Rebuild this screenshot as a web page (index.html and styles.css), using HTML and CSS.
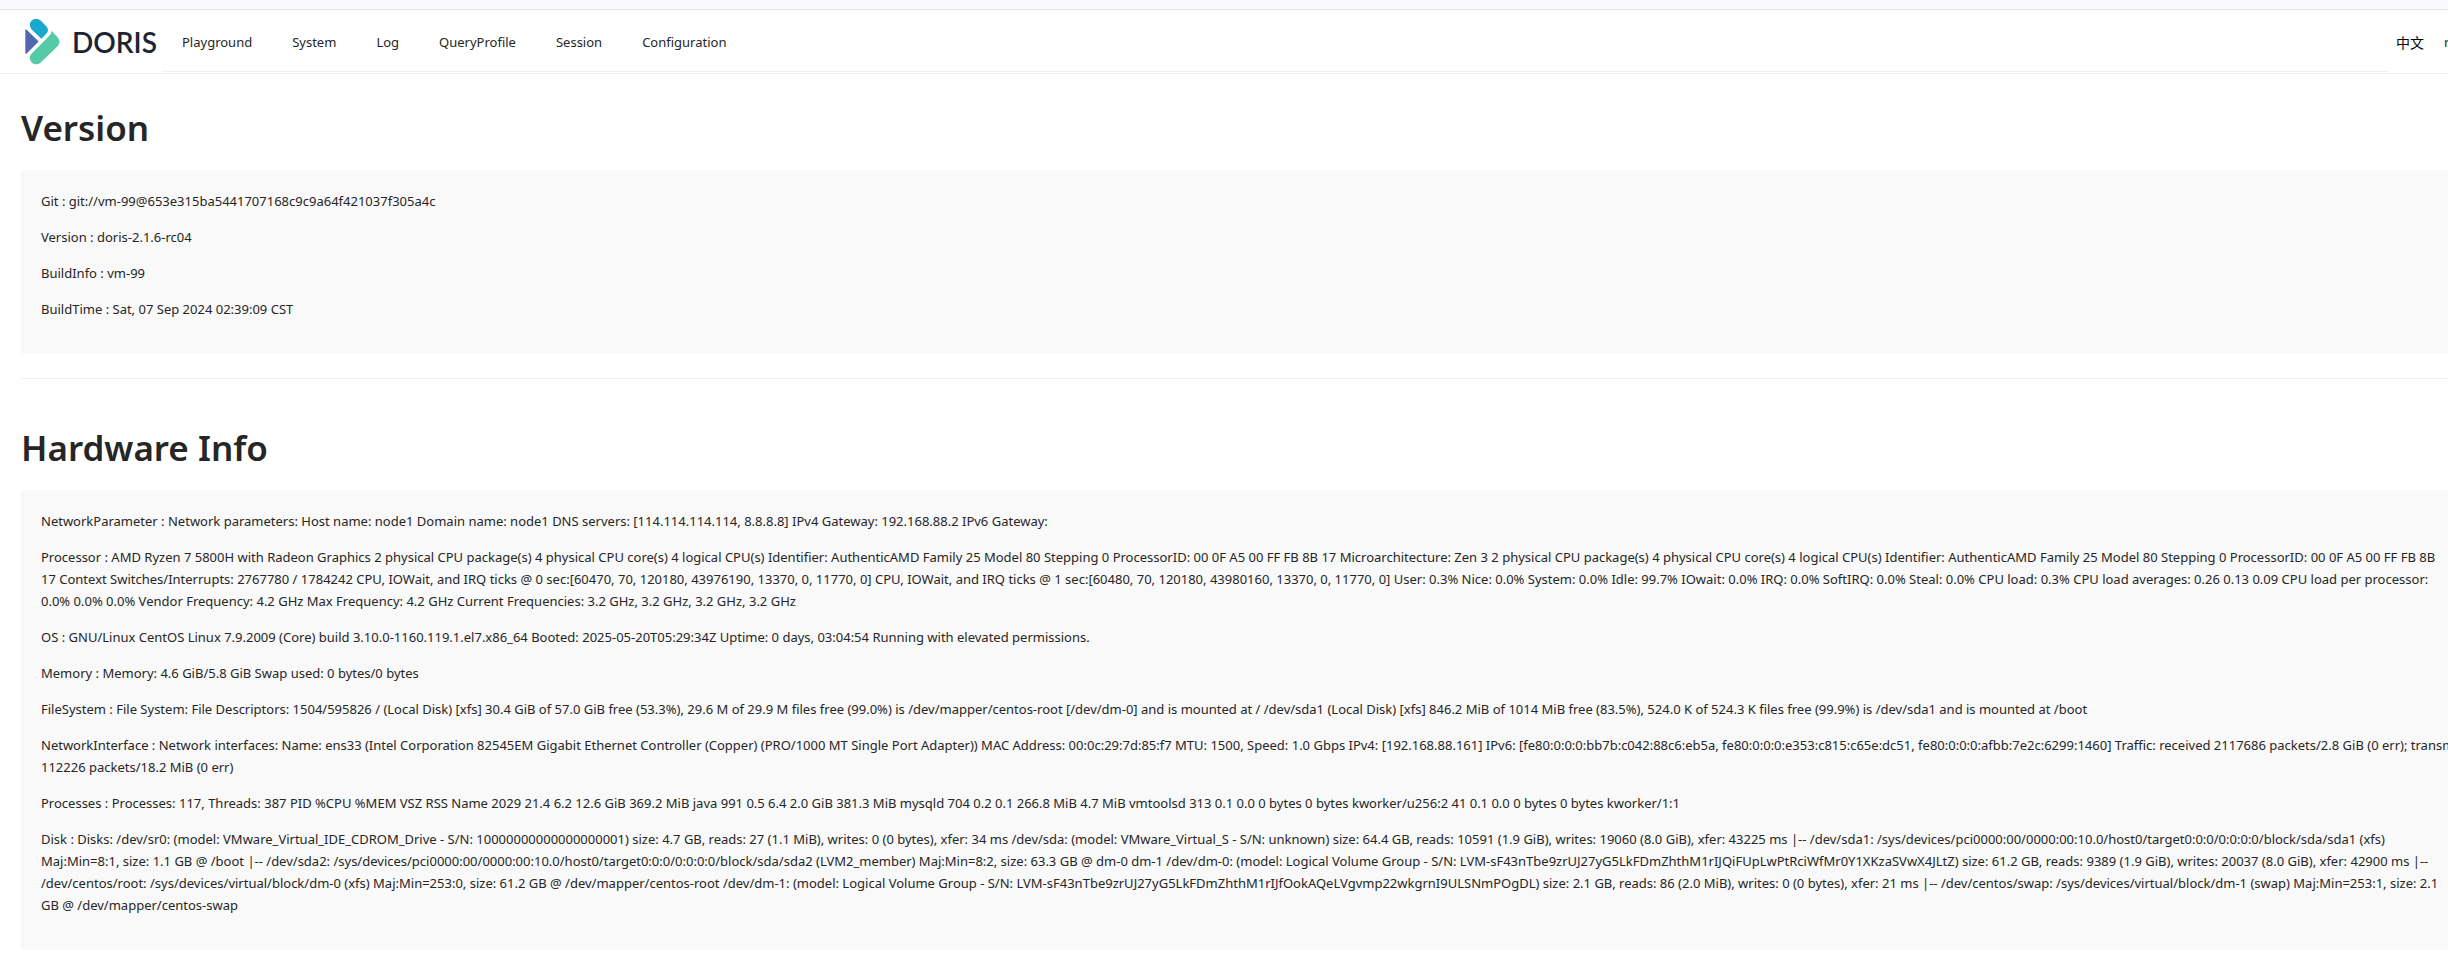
FILE: index.html
```html
<!DOCTYPE html>
<html lang="en">
<head>
    <meta charset="utf-8">
    <title>Apache Doris</title>
    <link rel="stylesheet" href="styles.css">
</head>
<body>
    <div class="top-strip"></div>
    <header class="header">
        <a class="logo" href="#">
            <svg class="logo-mark" viewBox="0 0 105 140" aria-hidden="true">
                <path fill="#19a9cd" d="M20 34A19 19 0 0 1 47 7L64 24Q74 36 64 47L49 62Z"/>
                <path fill="#5268ae" d="M1 36Q1 33 5 35L41 70L5 106Q1 108 1 105Z"/>
                <path fill="#54cba6" d="M79 38L98 57Q109 71 98 84L47 133A19 19 0 0 1 20 106L76 50Q79 46 79 38Z"/>
            </svg>
            <span class="logo-text">DORIS</span>
        </a>
        <nav class="menu">
            <a href="#">Playground</a>
            <a href="#">System</a>
            <a href="#">Log</a>
            <a href="#">QueryProfile</a>
            <a href="#">Session</a>
            <a href="#">Configuration</a>
        </nav>
        <div class="user">
            <button type="button" class="lang">中文</button>
            <a class="user-name" href="#">root</a>
        </div>
    </header>

    <main class="content">
        <h1>Version</h1>
        <div class="card">
            <p>Git : git://vm-99@653e315ba5441707168c9c9a64f421037f305a4c</p>
            <p>Version : doris-2.1.6-rc04</p>
            <p>BuildInfo : vm-99</p>
            <p>BuildTime : Sat, 07 Sep 2024 02:39:09 CST</p>
        </div>

        <hr>

        <h1>Hardware Info</h1>
        <div class="card">
            <p>NetworkParameter : Network parameters: Host name: node1 Domain name: node1 DNS servers: [114.114.114.114, 8.8.8.8] IPv4 Gateway: 192.168.88.2 IPv6 Gateway:</p>
            <p>Processor : AMD Ryzen 7 5800H with Radeon Graphics 2 physical CPU package(s) 4 physical CPU core(s) 4 logical CPU(s) Identifier: AuthenticAMD Family 25 Model 80 Stepping 0 ProcessorID: 00 0F A5 00 FF FB 8B 17 Microarchitecture: Zen 3 2 physical CPU package(s) 4 physical CPU core(s) 4 logical CPU(s) Identifier: AuthenticAMD Family 25 Model 80 Stepping 0 ProcessorID: 00 0F A5 00 FF FB 8B<br>
            17 Context Switches/Interrupts: 2767780 / 1784242 CPU, IOWait, and IRQ ticks @ 0 sec:[60470, 70, 120180, 43976190, 13370, 0, 11770, 0] CPU, IOWait, and IRQ ticks @ 1 sec:[60480, 70, 120180, 43980160, 13370, 0, 11770, 0] User: 0.3% Nice: 0.0% System: 0.0% Idle: 99.7% IOwait: 0.0% IRQ: 0.0% SoftIRQ: 0.0% Steal: 0.0% CPU load: 0.3% CPU load averages: 0.26 0.13 0.09 CPU load per processor:<br>
            0.0% 0.0% 0.0% Vendor Frequency: 4.2 GHz Max Frequency: 4.2 GHz Current Frequencies: 3.2 GHz, 3.2 GHz, 3.2 GHz, 3.2 GHz</p>
            <p>OS : GNU/Linux CentOS Linux 7.9.2009 (Core) build 3.10.0-1160.119.1.el7.x86_64 Booted: 2025-05-20T05:29:34Z Uptime: 0 days, 03:04:54 Running with elevated permissions.</p>
            <p>Memory : Memory: 4.6 GiB/5.8 GiB Swap used: 0 bytes/0 bytes</p>
            <p>FileSystem : File System: File Descriptors: 1504/595826 / (Local Disk) [xfs] 30.4 GiB of 57.0 GiB free (53.3%), 29.6 M of 29.9 M files free (99.0%) is /dev/mapper/centos-root [/dev/dm-0] and is mounted at / /dev/sda1 (Local Disk) [xfs] 846.2 MiB of 1014 MiB free (83.5%), 524.0 K of 524.3 K files free (99.9%) is /dev/sda1 and is mounted at /boot</p>
            <p>NetworkInterface : Network interfaces: Name: ens33 (Intel Corporation 82545EM Gigabit Ethernet Controller (Copper) (PRO/1000 MT Single Port Adapter)) MAC Address: 00:0c:29:7d:85:f7 MTU: 1500, Speed: 1.0 Gbps IPv4: [192.168.88.161] IPv6: [fe80:0:0:0:bb7b:c042:88c6:eb5a, fe80:0:0:0:e353:c815:c65e:dc51, fe80:0:0:0:afbb:7e2c:6299:1460] Traffic: received 2117686 packets/2.8 GiB (0 err); transmitted<br>
            112226 packets/18.2 MiB (0 err)</p>
            <p>Processes : Processes: 117, Threads: 387 PID %CPU %MEM VSZ RSS Name 2029 21.4 6.2 12.6 GiB 369.2 MiB java 991 0.5 6.4 2.0 GiB 381.3 MiB mysqld 704 0.2 0.1 266.8 MiB 4.7 MiB vmtoolsd 313 0.1 0.0 0 bytes 0 bytes kworker/u256:2 41 0.1 0.0 0 bytes 0 bytes kworker/1:1</p>
            <p>Disk : Disks: /dev/sr0: (model: VMware_Virtual_IDE_CDROM_Drive - S/N: 10000000000000000001) size: 4.7 GB, reads: 27 (1.1 MiB), writes: 0 (0 bytes), xfer: 34 ms /dev/sda: (model: VMware_Virtual_S - S/N: unknown) size: 64.4 GB, reads: 10591 (1.9 GiB), writes: 19060 (8.0 GiB), xfer: 43225 ms |-- /dev/sda1: /sys/devices/pci0000:00/0000:00:10.0/host0/target0:0:0/0:0:0:0/block/sda/sda1 (xfs)<br>
            Maj:Min=8:1, size: 1.1 GB @ /boot |-- /dev/sda2: /sys/devices/pci0000:00/0000:00:10.0/host0/target0:0:0/0:0:0:0/block/sda/sda2 (LVM2_member) Maj:Min=8:2, size: 63.3 GB @ dm-0 dm-1 /dev/dm-0: (model: Logical Volume Group - S/N: LVM-sF43nTbe9zrUJ27yG5LkFDmZhthM1rIJQiFUpLwPtRciWfMr0Y1XKzaSVwX4JLtZ) size: 61.2 GB, reads: 9389 (1.9 GiB), writes: 20037 (8.0 GiB), xfer: 42900 ms |--<br>
            /dev/centos/root: /sys/devices/virtual/block/dm-0 (xfs) Maj:Min=253:0, size: 61.2 GB @ /dev/mapper/centos-root /dev/dm-1: (model: Logical Volume Group - S/N: LVM-sF43nTbe9zrUJ27yG5LkFDmZhthM1rIJfOokAQeLVgvmp22wkgrnI9ULSNmPOgDL) size: 2.1 GB, reads: 86 (2.0 MiB), writes: 0 (0 bytes), xfer: 21 ms |-- /dev/centos/swap: /sys/devices/virtual/block/dm-1 (swap) Maj:Min=253:1, size: 2.1<br>
            GB @ /dev/mapper/centos-swap</p>
        </div>
    </main>
</body>
</html>
```
FILE: styles.css
```css
body {
    margin: 0;
    font-family: "Noto Sans", "Noto Sans CJK SC", sans-serif;
    font-size: 13px;
    line-height: 22px;
    color: #262626;
    background-color: #fff;
    overflow-x: hidden;
}
a {
    color: inherit;
    text-decoration: none;
}
.top-strip {
    height: 9px;
    background-color: #f9f9ff;
    border-bottom: 1px solid #e2e2e9;
}
.header {
    display: flex;
    height: 63px;
    border-bottom: 1px solid #f0f0f0;
}
.logo {
    display: flex;
    align-items: center;
    gap: 12px;
    width: 137px;
    padding: 0 0 0 25px;
}
.logo-mark {
    width: 35px;
    height: 47px;
}
.logo-text {
    font-family: Lato, sans-serif;
    font-size: 28px;
    font-weight: 600;
    color: #1d2434;
}
.menu {
    display: flex;
    flex: 1;
    height: 61px;
    border-bottom: 1px solid #f0f0f0;
}
.menu a {
    padding: 0 20px;
    line-height: 64px;
}
.user {
    display: flex;
    align-items: center;
    gap: 20px;
    width: 60px;
    white-space: nowrap;
}
.lang {
    flex: none;
    margin-left: 8px;
    padding: 0;
    border: none;
    background: none;
    font-family: inherit;
    font-size: 14px;
    color: #000;
    cursor: pointer;
}
.content {
    padding: 30px 0 9px 21px;
}
h1 {
    margin: 0 0 18px;
    font-size: 35px;
    line-height: 48px;
    font-weight: 600;
}
.card {
    padding: 20px;
    background-color: #f9f9f9;
    white-space: nowrap;
}
.card p {
    margin: 0 0 14px;
}
hr {
    margin: 24px 0 45px;
    border: none;
    border-top: 1px solid #f0f0f0;
}
```
